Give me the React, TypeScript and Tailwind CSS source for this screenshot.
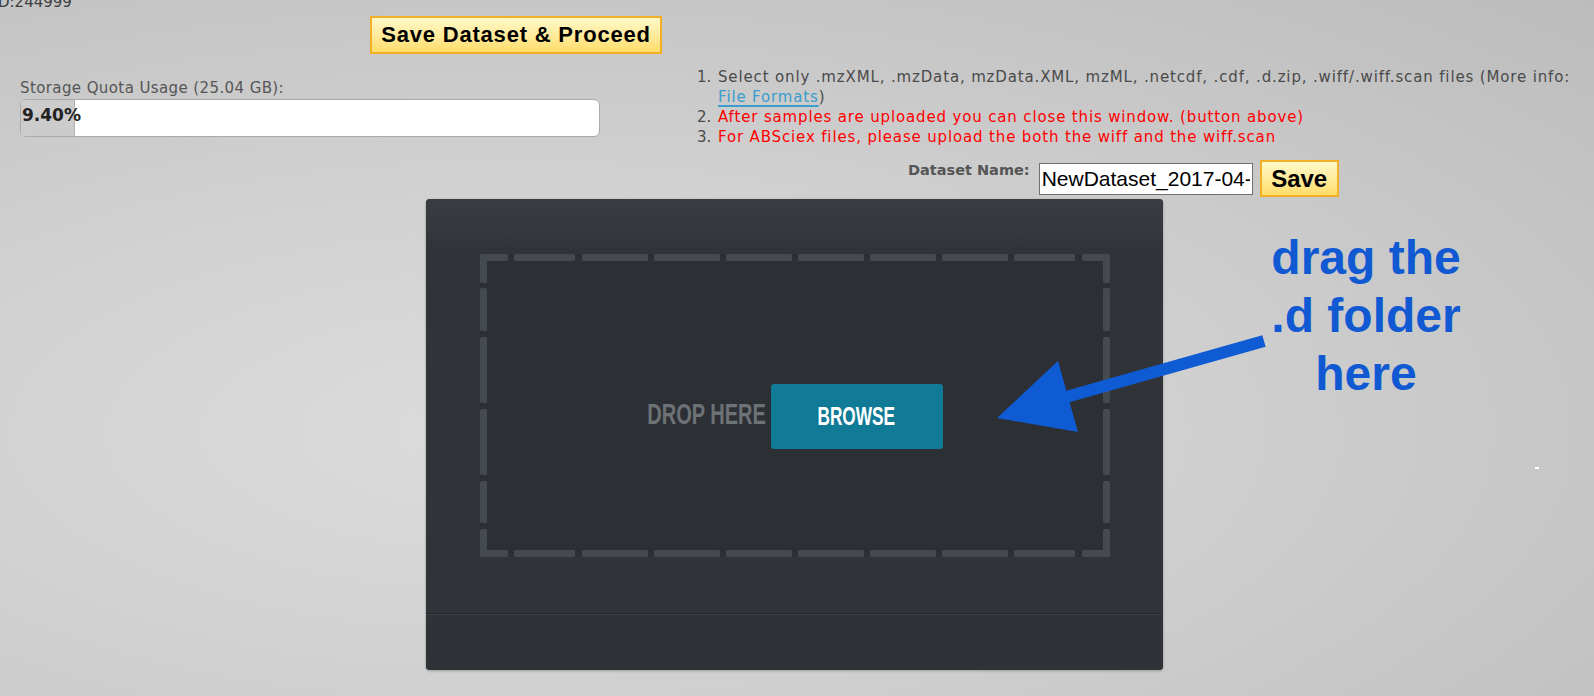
import { useState } from 'react';

const TOP_DASHES: [number, number][] = [
  [0, 28], [34, 95], [102, 168], [174, 240], [246, 312],
  [318, 384], [390, 456], [462, 528], [534, 595], [602, 630],
];
const SIDE_DASHES: [number, number][] = [
  [0, 29], [34, 77], [83, 149], [155, 221], [227, 269], [275, 303],
];

function DashedFrame() {
  return (
    <svg className="absolute inset-0" width="630" height="303" viewBox="0 0 630 303">
      {TOP_DASHES.map(([a, b]) => (
        <g key={`h${a}`} fill="#454a4f">
          <rect x={a} y={0} width={b - a} height={7} rx={1.5} />
          <rect x={a} y={296} width={b - a} height={7} rx={1.5} />
        </g>
      ))}
      {SIDE_DASHES.map(([a, b]) => (
        <g key={`v${a}`} fill="#454a4f">
          <rect x={0} y={a} width={7} height={b - a} rx={1.5} />
          <rect x={623} y={a} width={7} height={b - a} rx={1.5} />
        </g>
      ))}
    </svg>
  );
}

export default function App() {
  const [name, setName] = useState('NewDataset_2017-04-12_10-31');

  return (
    <div className="relative h-[696px] w-full overflow-hidden bg-[radial-gradient(ellipse_at_32%_62%,#dcdcdc_0%,#d1d1d1_40%,#bcbcbc_100%)] font-['DejaVu_Sans',sans-serif] text-[#4a4a4a]">
      {/* job id, cut off by the scroll position */}
      <div className="-ml-[2px] -mt-[6px] text-[15px] leading-[17px] text-[#3d3d3d]">D:244999</div>

      <div className="-mt-px flex">
        {/* left: proceed + quota */}
        <div className="w-[697px] shrink-0">
          <button className="ml-[370px] mt-[6px] h-[38px] w-[292px] border-2 border-[#f2b024] bg-gradient-to-b from-[#fff8c8] to-[#ffdd6a] font-['Liberation_Sans',Arial,sans-serif] text-[22px] font-bold leading-none tracking-[0.8px] text-black">
            Save Dataset &amp; Proceed
          </button>
          <div className="ml-[20px] mt-[26px] text-[15px] leading-[17px] tracking-[0.4px] text-[#555]">
            Storage Quota Usage (25.04 GB):
          </div>
          <div className="relative ml-[20px] mt-[2px] h-[38px] w-[580px] overflow-hidden rounded-[6px] border border-[#a9a9a9] bg-white">
            <div className="h-full w-[54px] border-r border-[#b5b5b5] bg-[#cccccc]" />
            <span className="absolute left-[1px] top-[5px] text-[17px] font-bold leading-[20px] text-[#222]">9.40%</span>
          </div>
        </div>

        {/* right: instructions + dataset name */}
        <div className="flex-1 pt-[57px]">
          <ol className="text-[15px] leading-[20px] tracking-[0.85px]">
            <li className="flex">
              <span className="w-[21px] shrink-0 tracking-normal text-[#4a4a4a]">1.</span>
              <span className="text-[#4a4a4a]">
                Select only .mzXML, .mzData, mzData.XML, mzML, .netcdf, .cdf, .d.zip, .wiff/.wiff.scan files (More info:
                <br />
                <a className="text-[#3a9dcb] underline decoration-2 underline-offset-[3px]">File Formats</a>)
              </span>
            </li>
            <li className="flex">
              <span className="w-[21px] shrink-0 tracking-normal text-[#4a4a4a]">2.</span>
              <span className="text-[#ff0000]">After samples are uploaded you can close this window. (button above)</span>
            </li>
            <li className="flex">
              <span className="w-[21px] shrink-0 tracking-normal text-[#4a4a4a]">3.</span>
              <span className="text-[#ff0000]">For ABSciex files, please upload the both the wiff and the wiff.scan</span>
            </li>
          </ol>

          <div className="mt-[13px] flex items-start pl-[211px]">
            <span className="mt-[2px] text-[14.5px] font-bold leading-[17px] text-[#555]">Dataset Name:</span>
            <input
              value={name}
              onChange={(e) => setName(e.target.value)}
              className="ml-[9px] mt-[3px] h-[32px] w-[214px] border border-[#6f6f6f] bg-white px-[2px] font-['Liberation_Sans',Arial,sans-serif] text-[21px] text-black outline-none"
            />
            <button className="ml-[7px] h-[37px] w-[79px] border-2 border-[#f2b024] bg-gradient-to-b from-[#fff8c8] to-[#ffdd6a] font-['Liberation_Sans',Arial,sans-serif] text-[24px] font-bold leading-none text-black">
              Save
            </button>
          </div>
        </div>
      </div>

      {/* uploader panel */}
      <div className="ml-[426px] mt-[2px] w-[737px] overflow-hidden rounded-[4px] bg-[#2f3236] shadow-[0_1px_3px_rgba(0,0,0,0.25)]">
        <div className="h-[414px] bg-[linear-gradient(to_bottom,#393c40_0px,#35383c_30px,#303337_50px,#303337_100%)] pl-[54px] pt-[55px]">
          <div className="relative h-[303px] w-[630px] bg-[#2c2f33]">
            <DashedFrame />
            <div className="relative flex items-center justify-center pt-[130px]">
              <div className="mb-[5px] flex w-[118px] justify-end">
                <span className="inline-block origin-right scale-x-[0.69] whitespace-nowrap font-['Liberation_Sans',Arial,sans-serif] text-[29px] font-bold leading-none text-[#6d7277]">
                  DROP HERE
                </span>
              </div>
              <button className="ml-[5px] flex h-[65px] w-[172px] items-center justify-center rounded-[3px] bg-[#117a96]">
                <span className="inline-block scale-x-[0.69] whitespace-nowrap font-['Liberation_Sans',Arial,sans-serif] text-[25px] font-bold leading-none text-white">
                  BROWSE
                </span>
              </button>
            </div>
          </div>
        </div>
        <div className="h-px bg-[#26292c]" />
        <div className="h-px bg-[#3a3e42]" />
        <div className="h-[55px] bg-[#2f3236]" />
      </div>

      {/* annotation overlay */}
      <svg className="pointer-events-none absolute left-0 top-0" width="1594" height="696">
        <line x1="1264" y1="341" x2="1066" y2="397" stroke="#0f5bd4" strokeWidth="12" />
        <polygon points="997,418 1058,361 1078,432" fill="#0f5bd4" />
      </svg>
      <div className="pointer-events-none absolute left-[1246px] top-[229px] w-[240px] text-center font-['Liberation_Sans',Arial,sans-serif] text-[48px] font-bold leading-[58px] text-[#1059d3]">
        drag the
        <br />
        .d folder
        <br />
        here
      </div>
      <div className="absolute left-[1535px] top-[467px] h-[2px] w-[4px] bg-white" />
    </div>
  );
}
